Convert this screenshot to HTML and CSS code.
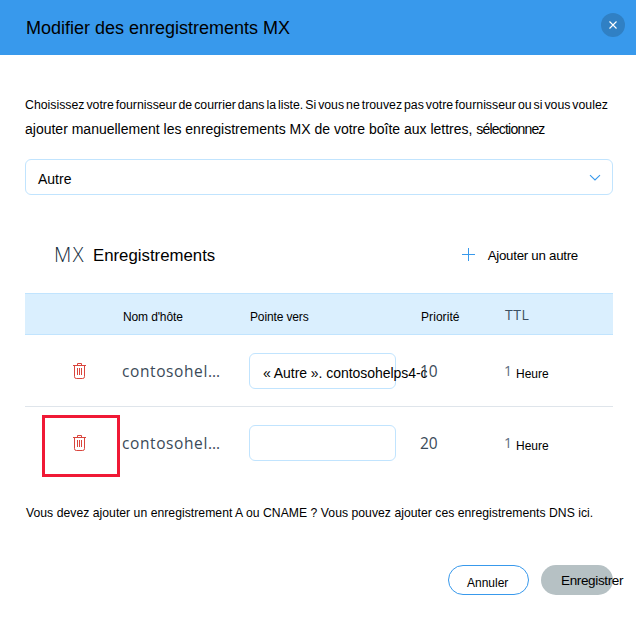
FILE: index.html
```html
<!DOCTYPE html>
<html lang="fr">
<head>
<meta charset="utf-8">
<title>Modifier des enregistrements MX</title>
<link rel="stylesheet" href="styles.css">
</head>
<body>
<header class="header">
  <h1 class="title">Modifier des enregistrements MX</h1>
  <button class="close" aria-label="Fermer"><svg width="8" height="8" viewBox="0 0 8 8"><path d="M.5 .5l7 7M7.5 .5l-7 7"/></svg></button>
</header>
<main class="content">
  <p class="intro"><span class="intro-first">Choisissez votre fournisseur de courrier dans la liste. Si vous ne trouvez pas votre fournisseur ou si vous voulez</span><span class="intro-second">ajouter manuellement les enregistrements MX de votre boîte aux lettres, <span class="tight">sélectionnez</span></span></p>
  <div class="select"><span class="select-value">Autre</span><svg width="12" height="8" viewBox="0 0 12 8"><path d="M1 1.2l5 4.8 5-4.8"/></svg></div>
  <div class="section-head">
    <h2 class="section-title"><span class="mx">MX</span><span class="section-name">Enregistrements</span></h2>
    <div class="add"><svg width="13" height="13" viewBox="0 0 13 13"><path d="M6.5 0v13M0 6.5h13"/></svg><span class="add-label">Ajouter un autre</span></div>
  </div>
  <div class="row row-head">
    <span></span><span class="col-name">Nom d'hôte</span><span class="col-name">Pointe vers</span><span class="col-name col-priority">Priorité</span><span class="ttl">TTL</span>
  </div>
  <div class="row row-first">
    <span class="delete"><svg width="13" height="16" viewBox="0 0 13 16"><path d="M0 2.5h13M4.5 2.5v-2h4v2M1.5 2.5v11.2q0 1.8 1.8 1.8h6.4q1.8 0 1.8-1.8V2.5M4.5 5v7M6.5 5v7M8.5 5v7"/></svg></span>
    <span class="host">contosohel…</span>
    <div class="field"><span class="field-value">« Autre ». contosohelps4-c</span></div>
    <span class="priority">10</span>
    <span class="time"><span class="hours">1</span><span class="unit">Heure</span></span>
  </div>
  <div class="row row-last">
    <span class="delete"><svg width="13" height="16" viewBox="0 0 13 16"><path d="M0 2.5h13M4.5 2.5v-2h4v2M1.5 2.5v11.2q0 1.8 1.8 1.8h6.4q1.8 0 1.8-1.8V2.5M4.5 5v7M6.5 5v7M8.5 5v7"/></svg><span class="highlight"></span></span>
    <span class="host">contosohel…</span>
    <div class="field"></div>
    <span class="priority">20</span>
    <span class="time"><span class="hours">1</span><span class="unit">Heure</span></span>
  </div>
  <p class="note">Vous devez ajouter un enregistrement A ou CNAME ? Vous pouvez ajouter ces enregistrements DNS ici.</p>
  <div class="actions"><button class="button cancel">Annuler</button><button class="button save">Enregistrer</button></div>
</main>
</body>
</html>
```
FILE: styles.css
```css
* { box-sizing: border-box; }
body { margin: 0; background: #fff; color: #000; font-family: "Liberation Sans", Arial, sans-serif; overflow: hidden; }
h1, h2, p { margin: 0; font-weight: 400; }
button { border: 0; padding: 0; font-family: inherit; color: #000; }
svg { display: block; fill: none; flex: none; }
.header { height: 55px; padding: 0 11px 0 26px; background: #3899ec; display: flex; justify-content: space-between; }
.title { font-size: 18px; line-height: 57px; }
.close { width: 24px; height: 24px; margin-top: 13px; border-radius: 50%; background: #3080c4; display: flex; align-items: center; justify-content: center; }
.close svg { stroke: #fff; stroke-width: 1.1; }
.content { padding: 37px 23px 0 25px; }
.intro { line-height: 25px; white-space: nowrap; }
.intro-first, .intro-second { display: block; height: 25px; }
.intro-first { font-size: 12.3px; word-spacing: -1.45px; line-height: 27px; }
.intro-second { font-size: 14px; }
.tight { letter-spacing: -.8px; }
.select { height: 36px; margin-top: 17px; padding: 0 11px 0 12px; border: 1px solid #c1e4fe; border-radius: 6px; display: flex; align-items: center; justify-content: space-between; }
.select-value { font-size: 14px; padding-top: 4px; }
.select svg { stroke: #3899ec; stroke-width: 1.1; margin-top: 2px; }
.section-head { height: 98px; padding: 21px 35px 0 30px; display: flex; align-items: center; justify-content: space-between; }
.section-title { display: flex; align-items: center; gap: 7px; height: 26px; }
.mx { width: 31px; font-family: "Open Sans", sans-serif; font-weight: 300; font-size: 20px; letter-spacing: 1.6px; margin-left: -1px; margin-right: 1px; color: #162d3d; }
.section-name { font-size: 16.8px; line-height: 26px; padding-top: 2px; }
.add { display: flex; align-items: center; gap: 13px; height: 25px; }
.add svg { stroke: #3899ec; stroke-width: 1; }
.add-label { font-size: 13.3px; letter-spacing: -.27px; padding-top: 2px; }
.row { height: 72px; display: grid; grid-template-columns: 97px 127px 171px 84px 1fr; align-items: center; }
.row-head { height: 42px; background: #daeffe; border: solid #c1e4fe; border-width: 1px 0; }
.col-name { font-size: 12px; padding: 6px 0 0 1px; letter-spacing: -.13px; }
.col-priority { letter-spacing: .07px; }
.ttl { font-family: "Open Sans", sans-serif; font-size: 14px; letter-spacing: .6px; padding-left: 1px; color: #3b5062; }
.row-first { border-bottom: 1px solid #dfe5eb; }
.row-last { padding-bottom: 1px; }
.delete { position: relative; padding-left: 48px; }
.delete svg { stroke: #d9453d; stroke-width: 1; }
.highlight { position: absolute; left: 17px; top: -20px; width: 78px; height: 62px; border: 3px solid #f01935; }
.host, .priority { font-family: "Open Sans", sans-serif; font-size: 15.5px; color: #3b4a58; }
.host { letter-spacing: .6px; }
.field { width: 147px; height: 36px; padding: 4px 0 0 13px; border: 1px solid #c1e4fe; border-radius: 6px; display: flex; align-items: center; white-space: nowrap; }
.field-value { font-size: 14px; letter-spacing: -.05px; }
.time { display: flex; align-items: center; gap: 4px; }
.hours { font-family: "Open Sans", sans-serif; font-size: 14px; color: #5b6c80; }
.unit { font-size: 12px; padding-top: 6px; }
.note { margin-top: 24px; padding-left: 1px; font-size: 12.2px; letter-spacing: .03px; line-height: 20px; white-space: nowrap; }
.actions { margin-top: 42px; display: flex; justify-content: flex-end; gap: 12px; }
.button { height: 30px; border-radius: 15px; display: flex; align-items: center; white-space: nowrap; }
.cancel { width: 81px; padding: 5px 0 0 18px; border: 1px solid #3899ec; background: #fff; font-size: 12px; }
.save { width: 72px; padding: 1px 0 0 20px; background: #b6c1c4; font-size: 13.5px; letter-spacing: -.35px; }
```
